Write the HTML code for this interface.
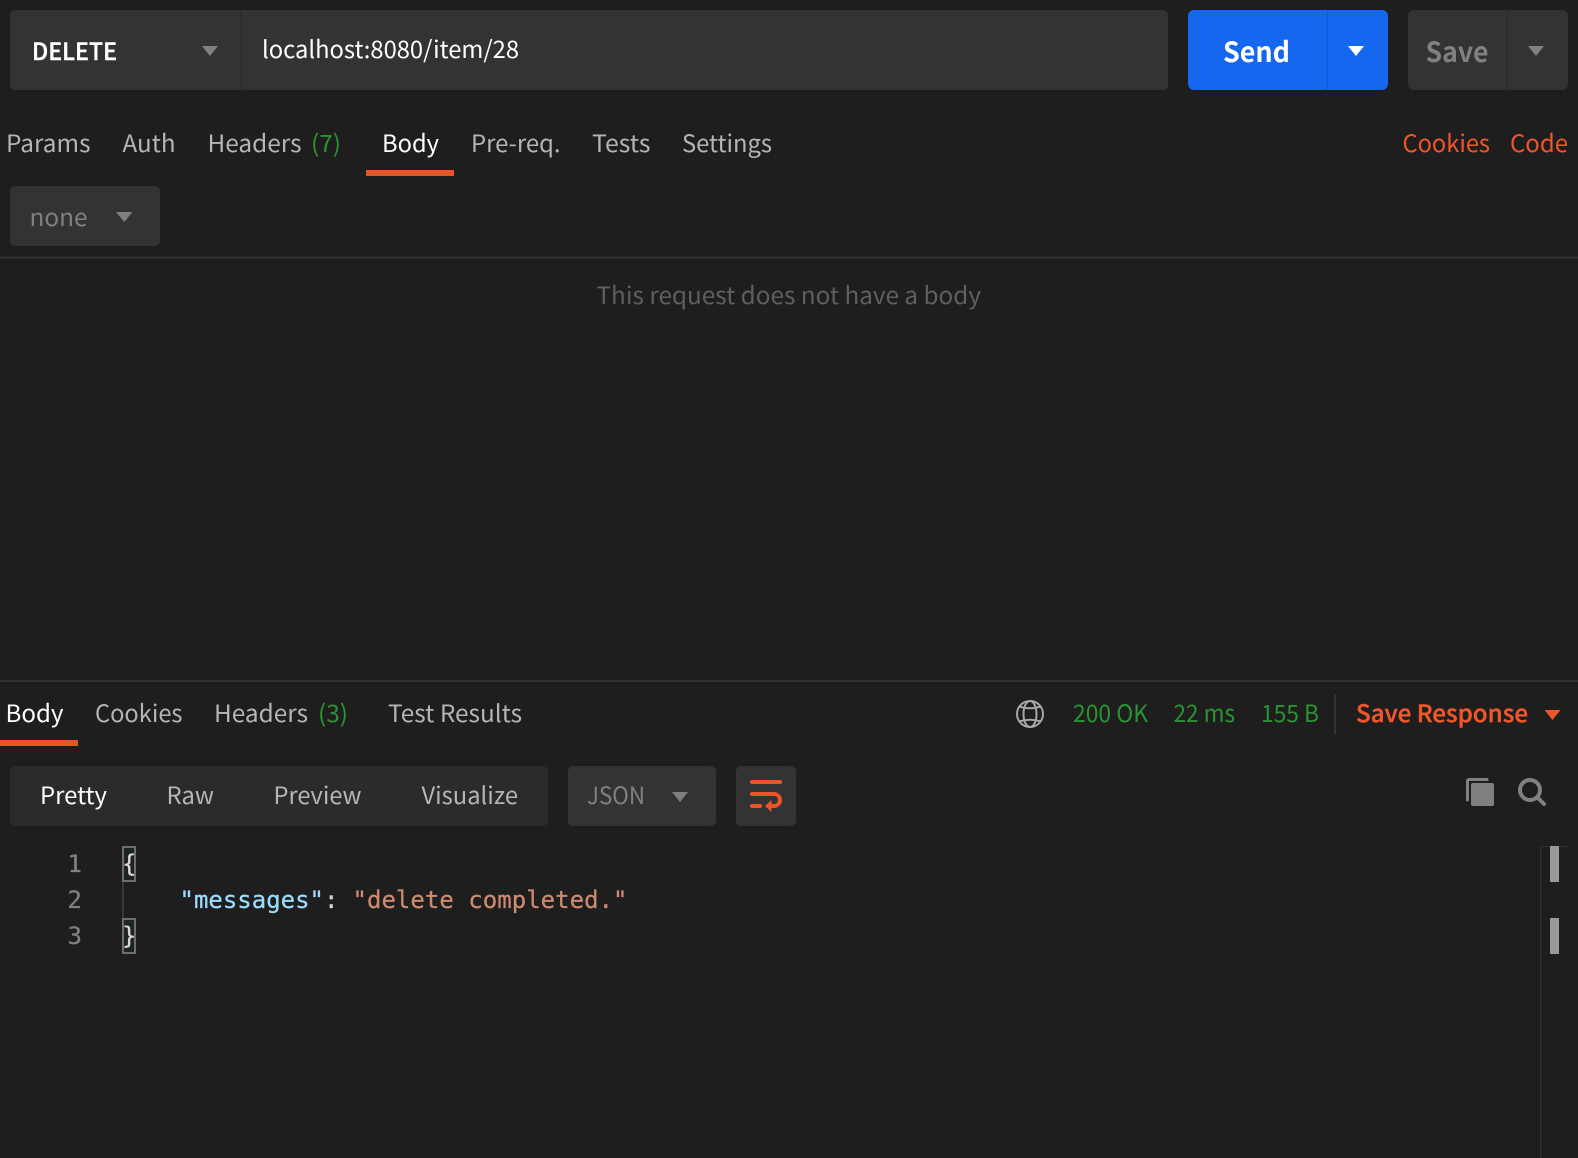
<!DOCTYPE html>
<html lang="en">
<head>
<meta charset="utf-8">
<title>DELETE localhost:8080/item/28</title>
<style>
html,body{margin:0;padding:0;background:#1e1e1e;width:1578px;height:1158px;overflow:hidden}
svg{display:block}
text{font-family:"Noto Sans CJK JP","Liberation Sans",sans-serif;font-size:24px;fill:#b5b5b5;white-space:pre}
.w{fill:#fff}
.b{font-weight:700}
.s{font-weight:500}
.g{fill:#2a9432}
.o{fill:#f0562a}
.d{fill:#808080}
.m{font-family:"DejaVu Sans Mono","Liberation Mono",monospace;stroke-width:.25px}
</style>
</head>
<body>
<svg width="1578" height="1158" viewBox="0 0 1578 1158" xmlns="http://www.w3.org/2000/svg">
<rect width="1578" height="1158" fill="#1e1e1e"/>

<!-- request bar -->
<rect x="10" y="10" width="1158" height="80" rx="5" fill="#333333"/>
<rect x="240" y="12" width="1.500" height="78" fill="#2c2c2c"/>
<text class="w s" x="32" y="60" textLength="85" lengthAdjust="spacingAndGlyphs" style="stroke:#fff;stroke-width:.4px">DELETE</text>
<path d="M202 46h16l-8 10z" fill="#808080"/>
<text class="w" x="262" y="58" textLength="257" lengthAdjust="spacingAndGlyphs">localhost:8080/item/28</text>

<rect x="1188" y="10" width="200" height="80" rx="6" fill="#1467ee"/>
<rect x="1326.500" y="10" width="1.500" height="80" fill="#105cd6"/>
<text class="w b" x="1223" y="62" style="font-size:28px" textLength="67" lengthAdjust="spacingAndGlyphs">Send</text>
<path d="M1348 46h16l-8 10z" fill="#fff"/>

<rect x="1408" y="10" width="160" height="80" rx="6" fill="#333333"/>
<rect x="1506.500" y="10" width="1.500" height="80" fill="#2c2c2c"/>
<text class="d b" x="1425.500" y="62" style="font-size:28px" textLength="63" lengthAdjust="spacingAndGlyphs">Save</text>
<path d="M1528 46h16l-8 10z" fill="#808080"/>

<!-- request tabs -->
<text x="6" y="152" textLength="84.500" lengthAdjust="spacingAndGlyphs">Params</text>
<text x="122.500" y="152" textLength="53" lengthAdjust="spacingAndGlyphs">Auth</text>
<text x="207.500" y="152" textLength="94" lengthAdjust="spacingAndGlyphs">Headers</text>
<text class="g" x="311" y="152" textLength="30" lengthAdjust="spacingAndGlyphs">(7)</text>
<text class="w" x="382" y="152" textLength="57" lengthAdjust="spacingAndGlyphs">Body</text>
<rect x="366" y="170" width="88" height="6" fill="#ec5428"/>
<text x="471" y="152" textLength="89.500" lengthAdjust="spacingAndGlyphs">Pre-req.</text>
<text x="592" y="152" textLength="58.500" lengthAdjust="spacingAndGlyphs">Tests</text>
<text x="682" y="152" textLength="90" lengthAdjust="spacingAndGlyphs">Settings</text>
<text class="o" x="1402.500" y="152" textLength="87.500" lengthAdjust="spacingAndGlyphs">Cookies</text>
<text class="o" x="1510" y="152" textLength="58" lengthAdjust="spacingAndGlyphs">Code</text>

<!-- body type -->
<rect x="10" y="186" width="150" height="60" rx="5" fill="#333333"/>
<text class="d" x="29.500" y="226" textLength="58" lengthAdjust="spacingAndGlyphs">none</text>
<path d="M116 212h16.500l-8.250 10z" fill="#808080"/>
<rect x="0" y="256.500" width="1578" height="2" fill="#333333"/>
<text x="596.500" y="304" style="fill:#5f5f5f" textLength="384.500" lengthAdjust="spacingAndGlyphs">This request does not have a body</text>

<!-- response header -->
<rect x="0" y="680" width="1578" height="2" fill="#333333"/>
<text class="w" x="5.500" y="722" textLength="58" lengthAdjust="spacingAndGlyphs">Body</text>
<rect x="0" y="740" width="78" height="6" fill="#ec5428"/>
<text x="95" y="722" textLength="87.500" lengthAdjust="spacingAndGlyphs">Cookies</text>
<text x="214" y="722" textLength="94" lengthAdjust="spacingAndGlyphs">Headers</text>
<text class="g" x="318" y="722" textLength="30" lengthAdjust="spacingAndGlyphs">(3)</text>
<text x="388" y="722" textLength="134" lengthAdjust="spacingAndGlyphs">Test Results</text>

<!-- globe -->
<g fill="none" stroke="#a6a6a6" stroke-width="2">
<circle cx="1030" cy="714" r="13"/>
<ellipse cx="1030" cy="714" rx="6.500" ry="13"/>
<path d="M1019 706.500q11 3.500 22 0M1019 721.500q11-3.500 22 0"/>
</g>

<text class="g" x="1073" y="722" textLength="75" lengthAdjust="spacingAndGlyphs">200 OK</text>
<text class="g" x="1173.500" y="722" textLength="61.500" lengthAdjust="spacingAndGlyphs">22 ms</text>
<text class="g" x="1261" y="722" textLength="58" lengthAdjust="spacingAndGlyphs">155 B</text>
<rect x="1334" y="694" width="2" height="40" fill="#333333"/>
<text class="o s" x="1356" y="722" textLength="172" lengthAdjust="spacingAndGlyphs" style="stroke:#f0562a;stroke-width:.4px">Save Response</text>
<path d="M1544.500 710h16l-8 10z" fill="#f0562a"/>

<!-- response toolbar -->
<rect x="10" y="766" width="538" height="60" rx="5" fill="#2b2b2b"/>
<text class="w" x="40" y="804" textLength="67" lengthAdjust="spacingAndGlyphs">Pretty</text>
<text x="166.500" y="804" textLength="47.500" lengthAdjust="spacingAndGlyphs">Raw</text>
<text x="273.500" y="804" textLength="88" lengthAdjust="spacingAndGlyphs">Preview</text>
<text x="421.500" y="804" textLength="96.500" lengthAdjust="spacingAndGlyphs">Visualize</text>

<rect x="568" y="766" width="148" height="60" rx="5" fill="#333333"/>
<text class="d" x="587" y="804" textLength="58" lengthAdjust="spacingAndGlyphs">JSON</text>
<path d="M672 792h16l-8 10z" fill="#808080"/>

<rect x="736" y="766" width="60" height="60" rx="5" fill="#333333"/>
<g fill="none" stroke="#ec5428" stroke-width="4" stroke-linecap="round">
<path d="M752 782h28"/>
<path d="M752 794h22a6 6 0 0 1 0 12h-5"/>
<path d="M752 806h8"/>
</g>
<path d="M765 806l6.500-6v12z" fill="#ec5428"/>

<!-- copy and search -->
<path d="M1467.500 800v-19a1.500 1.500 0 0 1 1.500-1.500h18" fill="none" stroke="#808080" stroke-width="3" stroke-linecap="round"/>
<rect x="1471" y="783" width="23" height="23" rx="2" fill="#808080"/>
<g fill="none" stroke="#808080" stroke-width="4">
<circle cx="1530" cy="790" r="10"/>
<path d="M1537.500 797.500l6.500 6.500" stroke-linecap="round"/>
</g>

<!-- editor -->
<text class="m" x="67.500" y="872" style="fill:#808080;stroke:#808080" textLength="14.500">1</text>
<text class="m" x="67.500" y="908" style="fill:#808080;stroke:#808080" textLength="14.500">2</text>
<text class="m" x="67.500" y="944" style="fill:#808080;stroke:#808080" textLength="14.500">3</text>

<rect x="123" y="847" width="12" height="34" fill="#1d261e" stroke="#6f6f6f" stroke-width="2"/>
<rect x="123" y="919" width="12" height="34" fill="#1d261e" stroke="#6f6f6f" stroke-width="2"/>
<rect x="122" y="882" width="2" height="36" fill="#383838"/>
<text class="m" x="122" y="872" style="fill:#d8d8d8;stroke:#d8d8d8" textLength="14">{</text>
<text class="m" x="122" y="944" style="fill:#d8d8d8;stroke:#d8d8d8" textLength="14">}</text>

<text class="m" x="179.500" y="908"><tspan style="fill:#9cdcfe;stroke:#9cdcfe">"messages"</tspan><tspan style="fill:#d4d4d4;stroke:#d4d4d4">:</tspan></text>
<text class="m" x="352.500" y="908" style="fill:#ce8a6e;stroke:#ce8a6e" textLength="275">"delete completed."</text>

<!-- scrollbar -->
<rect x="1540" y="846" width="1.500" height="312" fill="#2e2e2e"/>
<rect x="1540" y="846" width="28" height="1" fill="#2e2e2e"/>
<rect x="1550" y="846" width="9" height="36" fill="#999999"/>
<rect x="1550" y="918" width="9" height="36" fill="#999999"/>
</svg>
</body>
</html>
